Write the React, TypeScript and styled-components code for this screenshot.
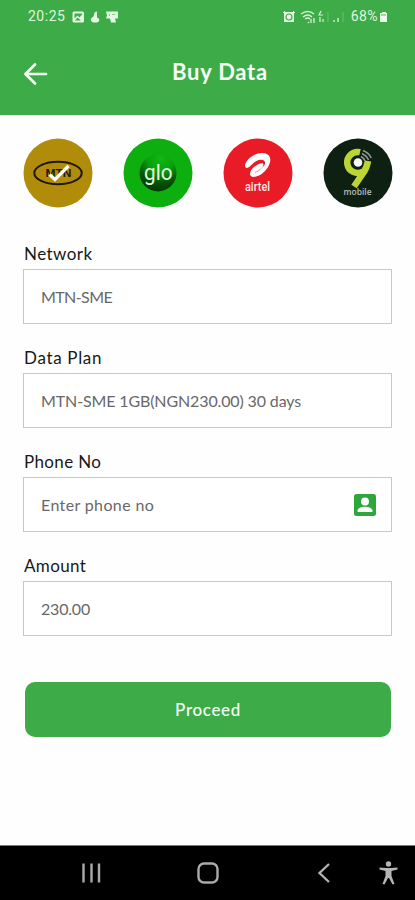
import React from "react";
import styled, { createGlobalStyle } from "styled-components";

const GlobalStyle = createGlobalStyle`
  * { box-sizing: border-box; }
  body { margin: 0; background: #fefefe; font-family: Lato, "Open Sans", sans-serif; }
  svg { display: block; flex: none; }
`;

const Screen = styled.div`
  width: 415px;
  height: 900px;
  display: flex;
  flex-direction: column;
  overflow: hidden;
  background: #fefefe;
`;

const Header = styled.header`
  height: 115px;
  flex: none;
  background: #3eab49;
  color: #f5fff3;
`;

const StatusBar = styled.div`
  height: 33px;
  padding: 0 26px 0 28px;
  display: flex;
  align-items: center;
  justify-content: space-between;
  font: 400 14px/33px Roboto, sans-serif;
  color: #dff6dc;
`;

const StatusGroup = styled.div`
  display: flex;
  align-items: center;
`;

const StatusText = styled.span<{ $spacing: number }>`
  letter-spacing: ${(p) => p.$spacing}px;
`;

const TitleBar = styled.div`
  height: 82px;
  padding: 0 24px 2px;
  display: grid;
  grid-template-columns: 24px 1fr 24px;
  align-items: center;
`;

const Title = styled.h1`
  margin: 0;
  padding: 0 0 2px 25px;
  text-align: center;
  font-size: 22px;
  line-height: 26px;
  font-weight: 700;
  letter-spacing: 0.75px;
  white-space: nowrap;
`;

const BackButton = styled.button`
  padding: 2px 0 0;
  border: 0;
  background: none;
  color: inherit;
`;

const Content = styled.main`
  flex: 1;
  padding: 23px 23px 0;
`;

const Networks = styled.div`
  display: flex;
  justify-content: space-between;
  width: 370px;
`;

const Form = styled.form`
  padding-top: 31px;
`;

const Field = styled.div`
  height: 104px;
`;

const Label = styled.label<{ $spacing: number }>`
  display: block;
  height: 30px;
  padding-left: 1px;
  line-height: 30px;
  font-size: 17px;
  color: #181818;
  letter-spacing: ${(p) => p.$spacing}px;
`;

const InputBox = styled.div`
  height: 55px;
  padding: 0 14px 0 17px;
  display: flex;
  align-items: center;
  justify-content: space-between;
  border: 1px solid #c8c8c8;
  background: #fff;
`;

const Value = styled.span<{ $spacing: number }>`
  font-size: 16px;
  line-height: 20px;
  color: #686868;
  white-space: nowrap;
  letter-spacing: ${(p) => p.$spacing}px;
`;

const Proceed = styled.button`
  display: block;
  width: 366px;
  height: 55px;
  margin: 27px 0 0 2px;
  padding: 0;
  border: 0;
  border-radius: 10px;
  background: #3eab49;
  color: #f4fff3;
  font: 500 17px/20px Lato, sans-serif;
  letter-spacing: 0.65px;
`;

const NavBar = styled.nav`
  height: 55px;
  flex: none;
  padding: 0 16px 0 81px;
  display: flex;
  justify-content: space-between;
  align-items: center;
  background: #000;
  border-top: 1px solid #777;
`;

const NavKeys = styled.div`
  width: 253px;
  display: flex;
  align-items: center;
  justify-content: space-between;
`;

const MtnLogo = () => (
  <svg width="70" height="70" viewBox="0 0 70 70">
    <circle cx="35" cy="35" r="34.5" fill="#b18c0b" />
    <ellipse cx="35" cy="35" rx="23.7" ry="11.2" fill="none" stroke="#1d1703" strokeWidth="2" />
    <text x="22.5" y="38.5" textLength="26" lengthAdjust="spacingAndGlyphs" fontFamily="Liberation Sans" fontSize="11" fontWeight="700" fill="#1d1703">MTN</text>
    <path d="M26.500 36.500L32 41.500L45.500 28" fill="none" stroke="#fff" strokeWidth="3.200" />
  </svg>
);

const GloLogo = () => (
  <svg width="70" height="70" viewBox="0 0 70 70">
    <defs>
      <radialGradient id="globe" cx=".58" cy=".1" r=".9">
        <stop offset="0" stopColor="#0dbb10" />
        <stop offset=".4" stopColor="#0a9f0d" />
        <stop offset=".75" stopColor="#055107" />
        <stop offset="1" stopColor="#033905" />
      </radialGradient>
    </defs>
    <circle cx="35" cy="35" r="34.5" fill="#0caf0e" />
    <circle cx="35" cy="35" r="18.5" fill="url(#globe)" />
    <text x="21" y="42" textLength="28.5" lengthAdjust="spacingAndGlyphs" fontFamily="Roboto" fontSize="22" fill="#e2f9df">glo</text>
  </svg>
);

const AirtelLogo = () => (
  <svg width="70" height="70" viewBox="0 0 70 70">
    <circle cx="35" cy="35" r="34.5" fill="#e91b26" />
    <path d="M22 28C22 22 31 15 39 15C47 15 49 21 46 27C43 34 36 39 30 39C25 38 27 32 31 29C35 26 38 24.500 40 25.500C42 28 36 33 32 34C32 36 39 31 41.500 27C43.500 23 40 21 36 22C31 23 28 29 24 30Q22 30 22 28Z" fill="#fff" />
    <text x="22" y="53" textLength="25" lengthAdjust="spacingAndGlyphs" fontFamily="Roboto" fontSize="12" fontWeight="500" fill="#ffe6e6">airtel</text>
  </svg>
);

const NineLogo = () => (
  <svg width="70" height="70" viewBox="0 0 70 70">
    <circle cx="35" cy="35" r="34.5" fill="#0d2012" />
    <path d="M45 23Q44 30 39.5 36L31 48.5" fill="none" stroke="#bdd532" strokeWidth="6.5" />
    <path d="M37 14.2A10.5 10.5 0 1 0 40 33.5" fill="none" stroke="#bdd532" strokeWidth="6.5" />
    <circle cx="35" cy="24.5" r="4.3" fill="#f8f8f8" />
    <path d="M38 18.5Q41 20 42 23M39 15.5Q44 18 45.5 22M40 12.5Q46 15 48.2 20" fill="none" stroke="#929992" strokeWidth="1.6" />
    <text x="20.5" y="57" textLength="28" lengthAdjust="spacingAndGlyphs" fontFamily="Open Sans" fontSize="8" fontWeight="600" fill="#b8beb8">mobile</text>
  </svg>
);

const LeftStatusIcons = () => (
  <svg width="54" height="16" viewBox="0 0 54 16" fill="#e5f8e1">
    <path fillRule="evenodd" d="M9 2.5h8.5q1.5 0 1.5 1.5v8q0 1.5-1.5 1.5H9q-1.5 0-1.5-1.5V4q0-1.5 1.5-1.5Zm.5 2v5l3-3 2 2 2.5-3v-1Zm.5 7h6l-3.5-3Z" />
    <path d="M32 2.5C28 3 30 6 28 8C25 9 25 13 29 13.5h3c3-1 3-4 0-5Z" />
    <path d="M41 2.5h12v7h-3l1 4h-5l-1-4h-4l1-3Z" />
    <path d="M44 5h1v2h-1zm3 0h3v1h-3z" fill="#86c886" />
  </svg>
);

const RightStatusIcons = () => (
  <svg width="68" height="16" viewBox="0 0 68 16" fill="none" stroke="#d9f3d6" strokeWidth="1.3">
    <path d="M1 3h10v10H1z" fill="#e5f8e1" stroke="none" />
    <circle cx="6" cy="8" r="3" stroke="#46a44d" strokeWidth="1.2" />
    <path d="M6 6v2h2M0 4l2-2m8 0l2 2" strokeWidth="1" />
    <path d="M18 5Q25 0 31 5M20 8q5-4 9 0M22 10q3-2 5 0M25 13l1 1" />
    <path d="M28 10v4m3-5v5" />
    <path d="M38 2l-2 4h4M37 8v5m3-3v3" strokeWidth="1.2" />
    <path d="M45 3v10M60 3v10" stroke="#65b869" />
    <path d="M51 11v2m4-4v4" />
  </svg>
);

const ContactIcon = () => (
  <svg width="24" height="24" viewBox="0 0 24 24">
    <rect x="1" y="1" width="22" height="22" rx="2.5" fill="#2ea73a" />
    <circle cx="12" cy="8.5" r="4" fill="#fff" />
    <path d="M4.5 19v-1c0-3 4-4.3 7.5-4.3s7.5 1.3 7.5 4.3v1Z" fill="#fff" />
  </svg>
);

const fields = [
  { label: "Network", value: "MTN-SME", labelSpacing: 0.45, valueSpacing: -0.6 },
  { label: "Data Plan", value: "MTN-SME 1GB(NGN230.00) 30 days", labelSpacing: 0.68, valueSpacing: -0.13 },
  { label: "Phone No", value: "Enter phone no", labelSpacing: 0.35, valueSpacing: 0.37, contact: true },
  { label: "Amount", value: "230.00", labelSpacing: 0.35, valueSpacing: -0.2 },
];

export default function App() {
  return (
    <Screen>
      <GlobalStyle />
      <Header>
        <StatusBar>
          <StatusGroup>
            <StatusText $spacing={0.5}>20:25</StatusText>
            <LeftStatusIcons />
          </StatusGroup>
          <StatusGroup>
            <RightStatusIcons />
            <StatusText $spacing={0.4}>68%</StatusText>
            <svg width="11" height="14" viewBox="0 0 11 14" fill="#edffea">
              <path d="M4 3V2h4v1h1v9H2V3Z" />
              <path d="M3 4h5v2H3z" fill="#a1d99e" />
            </svg>
          </StatusGroup>
        </StatusBar>
        <TitleBar>
          <BackButton type="button" aria-label="Back">
            <svg width="24" height="24" viewBox="0 0 24 24" fill="none" stroke="currentColor" strokeWidth="2.7" strokeLinecap="round" strokeLinejoin="round">
              <path d="M11 2.5L1.5 12l9.5 9.5M2 12H22" />
            </svg>
          </BackButton>
          <Title>Buy Data</Title>
        </TitleBar>
      </Header>
      <Content>
        <Networks>
          <MtnLogo />
          <GloLogo />
          <AirtelLogo />
          <NineLogo />
        </Networks>
        <Form>
          {fields.map((field) => (
            <Field key={field.label}>
              <Label $spacing={field.labelSpacing}>{field.label}</Label>
              <InputBox>
                <Value $spacing={field.valueSpacing}>{field.value}</Value>
                {field.contact && <ContactIcon />}
              </InputBox>
            </Field>
          ))}
          <Proceed type="button">Proceed</Proceed>
        </Form>
      </Content>
      <NavBar>
        <NavKeys>
          <svg width="20" height="20" viewBox="0 0 20 20" stroke="#aaa" strokeWidth="2.4">
            <path d="M2.5 0.5v19M10.5 0.5v19M18 0.5v19" />
          </svg>
          <svg width="22" height="22" viewBox="0 0 22 22" fill="none" stroke="#aaa" strokeWidth="2.4">
            <rect x="1.5" y="1.5" width="19" height="19" rx="5.5" />
          </svg>
          <svg width="20" height="22" viewBox="0 0 20 22" fill="none" stroke="#b4b4b4" strokeWidth="2.3">
            <path d="M15 2L5.5 11l9.5 9" />
          </svg>
        </NavKeys>
        <svg width="20" height="24" viewBox="0 0 20 24" fill="#b5b5b5">
          <circle cx="9.5" cy="3" r="2.7" />
          <path d="M.5 6.5L7 7h5l6.5-.5v2L12.5 10v5l3 8-2 .5L10 17H9l-3.5 6.500-2-.5 3-8v-5L.5 8.500Z" />
        </svg>
      </NavBar>
    </Screen>
  );
}
